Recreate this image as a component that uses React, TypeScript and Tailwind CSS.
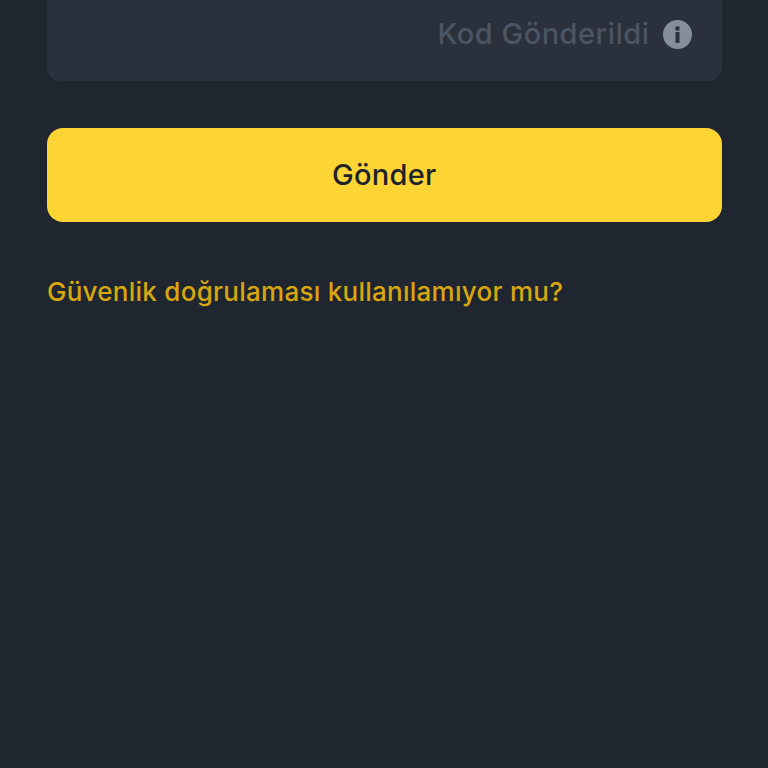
export default function App() {
  return (
    <div className="w-[768px] h-[768px] overflow-hidden bg-[#1f2630] pl-[47px] pr-[46.5px] flex flex-col font-['Inter',sans-serif]">
      <div className="h-[81px] shrink-0 bg-[#2a313c] rounded-b-[14px] flex items-center justify-end pr-[30px] pb-[13px]">
        <span className="text-[#4c5563] text-[29px] leading-[36px] tracking-[0.5px] font-medium mr-[13px]">Kod Gönderildi</span>
        <svg width="29" height="29" viewBox="0 0 29 29">
          <circle cx="14.5" cy="14.5" r="14.5" fill="#848e9c" />
          <rect x="12.5" y="6.5" width="4" height="4" fill="#2a313c" />
          <rect x="12.5" y="12" width="4" height="11" fill="#2a313c" />
        </svg>
      </div>
      <div className="mt-[47px] h-[94px] shrink-0 bg-[#fcd535] rounded-[16px] flex items-center justify-center text-[#1e2329] text-[29px] tracking-[0.3px] font-medium">
        Gönder
      </div>
      <div className="mt-[51px] text-[#d8a60f] text-[26px] leading-[38px] tracking-[0.26px] font-medium whitespace-nowrap">
        Güvenlik doğrulaması kullanılamıyor mu?
      </div>
    </div>
  );
}
